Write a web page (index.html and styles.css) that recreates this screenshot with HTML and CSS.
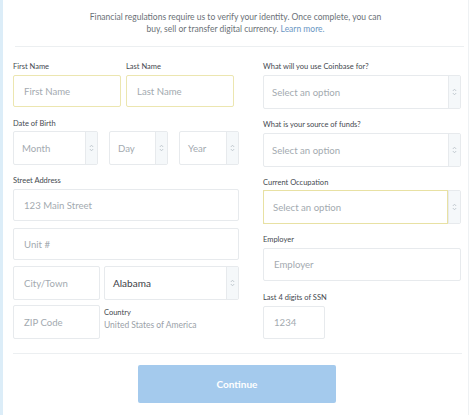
FILE: index.html
```html
<!DOCTYPE html>
<html>
<head>
<meta charset="utf-8">
<link rel="stylesheet" href="styles.css">
</head>
<body>
<div class="page">
  <div class="card">
    <p class="intro">Financial regulations require us to verify your identity. Once complete, you can<br>buy, sell or transfer digital currency. <a class="link">Learn more.</a></p>
    <div class="rule"></div>
    <div class="cols">
      <div class="col left">
        <div class="row names">
          <div class="field w108">
            <div class="label">First Name</div>
            <div class="input focus h32">First Name</div>
          </div>
          <div class="field w108">
            <div class="label">Last Name</div>
            <div class="input focus h32">Last Name</div>
          </div>
        </div>
        <div class="label g11">Date of Birth</div>
        <div class="row dob">
          <div class="sel w85"><div class="sel-main">Month</div><div class="sel-arrow"><svg width="5" height="8" viewBox="0 0 5 8"><path d="M0.8 3 L2.5 1.2 L4.2 3 M0.8 5 L2.5 6.8 L4.2 5" fill="none" stroke="#b8c0c7" stroke-width="0.8"/></svg></div></div>
          <div class="sel w59"><div class="sel-main">Day</div><div class="sel-arrow"><svg width="5" height="8" viewBox="0 0 5 8"><path d="M0.8 3 L2.5 1.2 L4.2 3 M0.8 5 L2.5 6.8 L4.2 5" fill="none" stroke="#b8c0c7" stroke-width="0.8"/></svg></div></div>
          <div class="sel w60"><div class="sel-main">Year</div><div class="sel-arrow"><svg width="5" height="8" viewBox="0 0 5 8"><path d="M0.8 3 L2.5 1.2 L4.2 3 M0.8 5 L2.5 6.8 L4.2 5" fill="none" stroke="#b8c0c7" stroke-width="0.8"/></svg></div></div>
        </div>
        <div class="label g10">Street Address</div>
        <div class="input h32">123 Main Street</div>
        <div class="input h32 g7">Unit #</div>
        <div class="row g6 city">
          <div class="input h34 w87">City/Town</div>
          <div class="sel flex1"><div class="sel-main dark">Alabama</div><div class="sel-arrow"><svg width="5" height="8" viewBox="0 0 5 8"><path d="M0.8 3 L2.5 1.2 L4.2 3 M0.8 5 L2.5 6.8 L4.2 5" fill="none" stroke="#b8c0c7" stroke-width="0.8"/></svg></div></div>
        </div>
        <div class="row g5 city">
          <div class="input h34 w87">ZIP Code</div>
          <div class="country">
            <div class="label">Country</div>
            <div class="country-val">United States of America</div>
          </div>
        </div>
      </div>
      <div class="col right">
        <div class="label">What will you use Coinbase for?</div>
        <div class="sel"><div class="sel-main">Select an option</div><div class="sel-arrow"><svg width="5" height="8" viewBox="0 0 5 8"><path d="M0.8 3 L2.5 1.2 L4.2 3 M0.8 5 L2.5 6.8 L4.2 5" fill="none" stroke="#b8c0c7" stroke-width="0.8"/></svg></div></div>
        <div class="label g10">What is your source of funds?</div>
        <div class="sel"><div class="sel-main">Select an option</div><div class="sel-arrow"><svg width="5" height="8" viewBox="0 0 5 8"><path d="M0.8 3 L2.5 1.2 L4.2 3 M0.8 5 L2.5 6.8 L4.2 5" fill="none" stroke="#b8c0c7" stroke-width="0.8"/></svg></div></div>
        <div class="label g10 lb1">Current Occupation</div>
        <div class="sel yellow"><div class="sel-main">Select an option</div><div class="sel-arrow"><svg width="5" height="8" viewBox="0 0 5 8"><path d="M0.8 3 L2.5 1.2 L4.2 3 M0.8 5 L2.5 6.8 L4.2 5" fill="none" stroke="#b8c0c7" stroke-width="0.8"/></svg></div></div>
        <div class="label g10">Employer</div>
        <div class="input h33">Employer</div>
        <div class="label g11">Last 4 digits of SSN</div>
        <div class="input h33 w62">1234</div>
      </div>
    </div>
    <div class="rule r2"></div>
    <div class="actions"><button class="btn">Continue</button></div>
  </div>
</div>
</body>
</html>
```
FILE: styles.css
```css
* { box-sizing: border-box; }
html, body { margin: 0; padding: 0; background: #fff; }
body { font-family: Lato, "Open Sans", sans-serif; color: #4b5157; }
.page { border-left: 3px solid #dcedf8; min-height: 415px; width: 474px; }
.card { width: 466px; min-height: 415px; border-right: 1px solid #eef1f3; background: #fff; }
.intro { margin: 0; padding-top: 11px; text-align: center; font-size: 8.5px; line-height: 12px; color: #6b7177; height: 46px; }
.link { color: #6a97c4; }
.rule { height: 1px; background: #eceff1; margin: 0 4px 0 12px; }
.cols { display: flex; padding: 14px 0 0 10px; gap: 24px; }
.col { display: flex; flex-direction: column; flex-shrink: 0; }
.left { width: 226px; }
.right { width: 198px; }
.row { display: flex; justify-content: space-between; }
.row.names { justify-content: flex-start; gap: 5px; }
.field { display: flex; flex-direction: column; }
.label { font-size: 7.5px; line-height: 12px; height: 12px; margin-bottom: 2px; color: #44494f; white-space: nowrap; }
.g11 { margin-top: 11px; }
.g10 { margin-top: 10px; }
.g7 { margin-top: 7px; }
.g6 { margin-top: 6px; }
.g5 { margin-top: 5px; }
.lb1 { margin-bottom: 1px; }
.input { border: 1px solid #e7eaed; border-radius: 2px; padding-left: 10px; display: flex; align-items: center; font-size: 9.6px; color: #a3aab0; background: #fff; }
.input.focus { border-color: #ece6b0; }
.h32 { height: 32px; }
.h33 { height: 33px; }
.h34 { height: 34px; }
.w108 { width: 108px; }
.w87 { width: 87px; }
.w62 { width: 62px; }
.dob { margin-top: -1px; }
.sel { display: flex; width: 100%; height: 34px; border: 1px solid #e7eaed; border-radius: 2px; }
.sel-main { flex: 1; display: flex; align-items: center; padding-left: 8px; font-size: 9.6px; color: #a3aab0; }
.sel-main.dark { color: #3b4046; padding-left: 8px; font-size: 10px; }
.sel-arrow { width: 12px; flex-shrink: 0; border-left: 1px solid #e7eaed; background: #f5f8fa; display: flex; align-items: center; justify-content: center; }
.sel.yellow .sel-main { border: 1px solid #e8e1a3; margin: -1px 0 -1px -1px; padding-left: 9px; }
.row .sel.w85 { width: 85px; }
.row .sel.w59 { width: 59px; }
.row .sel.w60 { width: 60px; }
.row .sel.flex1 { width: 135px; }
.country { width: 135px; padding-top: 2px; }
.country .label { margin-bottom: 0; }
.country-val { font-size: 8.5px; color: #9aa1a8; line-height: 12px; }
.r2 { margin-top: 14px; margin-left: 10px; margin-right: 6px; }
.actions { display: flex; padding: 11px 0 0 135px; }
.btn { width: 198px; height: 38px; border: none; border-radius: 2px; background: #a4caed; color: #fff; font-family: Lato, "Open Sans", sans-serif; font-weight: bold; font-size: 10px; }
```
